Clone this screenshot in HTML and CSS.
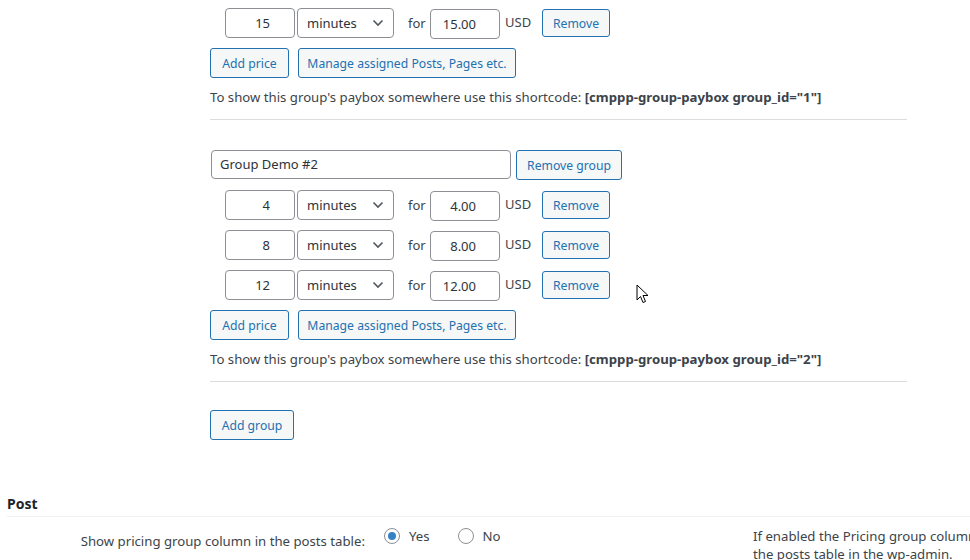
FILE: index.html
```html
<!DOCTYPE html>
<html>
<head>
<meta charset="utf-8">
<link rel="stylesheet" href="styles.css">
</head>
<body>
<div class="page">
  <div class="groups">
    <div class="group first">
      <div class="prices">
        <div class="price-row">
          <input class="num" type="text" value="15">
          <div class="select"><span>minutes</span><svg class="chev" width="12" height="8" viewBox="0 0 12 8"><path d="M1.5 1.5 L6 6 L10.5 1.5" fill="none" stroke="#50575e" stroke-width="1.6"/></svg></div>
          <span class="for">for</span>
          <input class="amount" type="text" value="15.00">
          <span class="cur">USD</span>
          <button class="btn remove">Remove</button>
        </div>
      </div>
      <div class="actions">
        <button class="btn add-price">Add price</button>
        <button class="btn manage">Manage assigned Posts, Pages etc.</button>
      </div>
      <p class="shortcode">To show this group's paybox somewhere use this shortcode: <b>[cmppp-group-paybox group_id="1"]</b></p>
    </div>
    <div class="group">
      <div class="name-row">
        <input class="name" type="text" value="Group Demo #2">
        <button class="btn remove-group">Remove group</button>
      </div>
      <div class="prices">
        <div class="price-row">
          <input class="num" type="text" value="4">
          <div class="select"><span>minutes</span><svg class="chev" width="12" height="8" viewBox="0 0 12 8"><path d="M1.5 1.5 L6 6 L10.5 1.5" fill="none" stroke="#50575e" stroke-width="1.6"/></svg></div>
          <span class="for">for</span>
          <input class="amount" type="text" value="4.00">
          <span class="cur">USD</span>
          <button class="btn remove">Remove</button>
        </div>
        <div class="price-row">
          <input class="num" type="text" value="8">
          <div class="select"><span>minutes</span><svg class="chev" width="12" height="8" viewBox="0 0 12 8"><path d="M1.5 1.5 L6 6 L10.5 1.5" fill="none" stroke="#50575e" stroke-width="1.6"/></svg></div>
          <span class="for">for</span>
          <input class="amount" type="text" value="8.00">
          <span class="cur">USD</span>
          <button class="btn remove">Remove</button>
        </div>
        <div class="price-row">
          <input class="num" type="text" value="12">
          <div class="select"><span>minutes</span><svg class="chev" width="12" height="8" viewBox="0 0 12 8"><path d="M1.5 1.5 L6 6 L10.5 1.5" fill="none" stroke="#50575e" stroke-width="1.6"/></svg></div>
          <span class="for">for</span>
          <input class="amount" type="text" value="12.00">
          <span class="cur">USD</span>
          <button class="btn remove">Remove</button>
        </div>
      </div>
      <div class="actions">
        <button class="btn add-price">Add price</button>
        <button class="btn manage">Manage assigned Posts, Pages etc.</button>
      </div>
      <p class="shortcode">To show this group's paybox somewhere use this shortcode: <b>[cmppp-group-paybox group_id="2"]</b></p>
    </div>
    <button class="btn add-group">Add group</button>
  </div>

  <h2 class="section-title">Post</h2>
  <div class="setting-row">
    <div class="label">Show pricing group column in the posts table:</div>
    <div class="radios">
      <label class="radio"><span class="dot checked"></span>Yes</label>
      <label class="radio"><span class="dot"></span>No</label>
    </div>
    <div class="desc">If enabled the Pricing group column will be shown in<br>the posts table in the wp-admin.</div>
  </div>

  <svg class="cursor" width="14" height="21" viewBox="0 0 14 21"><path d="M1 1 L1 16 L4.5 12.5 L7 18.5 L9.5 17.5 L7 11.5 L12 11.5 Z" fill="#fff" stroke="#000" stroke-width="1" stroke-linejoin="miter"/></svg>
</div>
</body>
</html>
```

FILE: styles.css
```css
* { box-sizing: border-box; }
html, body { margin: 0; padding: 0; background: #fff; }
body {
  font-family: "Noto Sans", "Open Sans", sans-serif;
  font-size: 13.2px;
  color: #3c434a;
  overflow: hidden;
  height: 560px;
}
.page { position: relative; width: 970px; height: 560px; overflow: hidden; }
.groups { padding: 8px 0 0 210px; display: flex; flex-direction: column; align-items: flex-start; }
.group { width: 697px; border-bottom: 1px solid #dcdcde; padding-bottom: 12px; }
.group + .group { margin-top: 28px; }
.name-row { display: flex; align-items: center; gap: 5px; margin-left: 1px; margin-bottom: 10px; }
input {
  font-family: inherit;
  font-size: 13px;
  color: #2c3338;
  border: 1px solid #8c8f94;
  border-radius: 4px;
  height: 30px;
  padding: 0 8px;
  background: #fff;
  outline: none;
}
.name { width: 300px; height: 29px; }
.name-row .btn { margin-top: 2px; }
.prices { display: flex; flex-direction: column; gap: 10px; padding-left: 15px; }
.price-row { display: flex; align-items: center; height: 30px; }
.num { width: 70px; text-align: right; padding-right: 24px; }
.select {
  width: 97px; height: 30px; margin-left: 2px;
  border: 1px solid #8c8f94; border-radius: 4px;
  display: flex; align-items: center; justify-content: space-between;
  padding: 0 9px 0 9px; color: #2c3338; font-size: 13px;
}
.chev { display: block; }
.for { margin-left: 14px; width: 22px; font-size: 13px; }
.amount { width: 70px; text-align: right; padding-right: 23px; height: 30px; margin-top: 2px; }
.cur { margin-left: 5px; width: 37px; margin-top: -3px; font-size: 13px; }
.btn {
  font-family: inherit;
  font-size: 12.2px;
  color: #2271b1;
  background: #f6f7f7;
  border: 1px solid #2271b1;
  border-radius: 3px;
  height: 30px;
  padding: 0;
  cursor: pointer;
  white-space: nowrap;
  text-align: center;
}
.remove { width: 68px; height: 28px; }
.add-price { width: 79px; }
.manage { width: 218px; }
.remove-group { width: 106px; }
.add-group { width: 84px; margin-top: 28px; }
.actions { display: flex; gap: 9px; margin-top: 10px; }
.shortcode { margin: 9px 0 0; line-height: 20px; }
.shortcode b { color: #3c434a; font-weight: 700; }
.section-title {
  margin: 54px 0 0 7px;
  font-size: 14px;
  font-weight: 700;
  color: #1d2327;
  line-height: 20px;
  padding-bottom: 2px;
  border-bottom: 1px solid #f0f0f1;
}
.setting-row { display: flex; align-items: flex-start; padding-top: 8px; }
.label { flex: none; width: 365px; text-align: right; padding-top: 7px; line-height: 18px; }
.radios { flex: none; width: 388px; display: flex; gap: 28px; padding-left: 19px; margin-top: 3px; }
.radio { display: flex; align-items: center; gap: 9px; line-height: 16px; }
.dot {
  width: 16px; height: 16px; border-radius: 50%;
  border: 1px solid #8c8f94; background: #fff;
  display: inline-flex; align-items: center; justify-content: center;
}
.dot.checked::after {
  content: ""; width: 8px; height: 8px; border-radius: 50%; background: #3582c4;
}
.desc { flex: none; margin-top: 2px; line-height: 18px; white-space: nowrap; }
.cursor { position: absolute; left: 636px; top: 284px; }
```
